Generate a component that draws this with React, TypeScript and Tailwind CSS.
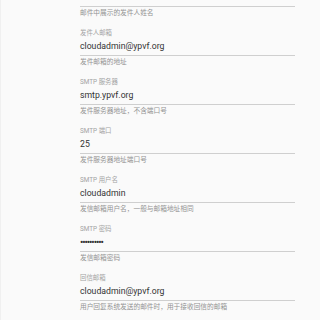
import React from "react";

type Field = {
  label: string;
  value: string;
  hint: string;
  secret?: boolean;
};

const fields: Field[] = [
  { label: "发件人名称", value: "cloudadmin", hint: "邮件中展示的发件人姓名" },
  { label: "发件人邮箱", value: "cloudadmin@ypvf.org", hint: "发件邮箱的地址" },
  { label: "SMTP 服务器", value: "smtp.ypvf.org", hint: "发件服务器地址，不含端口号" },
  { label: "SMTP 端口", value: "25", hint: "发件服务器地址端口号" },
  { label: "SMTP 用户名", value: "cloudadmin", hint: "发信邮箱用户名，一般与邮箱地址相同" },
  { label: "SMTP 密码", value: "••••••••••", hint: "发信邮箱密码", secret: true },
  { label: "回信邮箱", value: "cloudadmin@ypvf.org", hint: "用户回复系统发送的邮件时，用于接收回信的邮箱" },
];

const font = "font-['Roboto','Noto_Sans_CJK_SC',sans-serif]";

function SettingField({ field }: { field: Field }) {
  return (
    <div className="w-[215px] pb-[9px]">
      <div className="flex h-[10px] items-center text-[6.4px] leading-none text-[#a3a3a3]">
        {field.label}
      </div>
      <div className="flex h-[18px] items-center border-b border-[#cfcfcf] text-[8.7px] leading-none text-[#333333]">
        {field.secret ? (
          <span className="text-[10px] tracking-[-1.1px]">{field.value}</span>
        ) : (
          field.value
        )}
      </div>
      <div className="flex h-[12px] items-center text-[6.7px] leading-none text-[#939393]">
        {field.hint}
      </div>
    </div>
  );
}

export default function App() {
  return (
    <div className={`h-[320px] w-[320px] overflow-hidden border-l border-[#f0f0f0] bg-[#fafafa] ${font}`}>
      <div className="ml-[79px] mt-[-21px]">
        {fields.map((f) => (
          <SettingField key={f.label} field={f} />
        ))}
      </div>
    </div>
  );
}
